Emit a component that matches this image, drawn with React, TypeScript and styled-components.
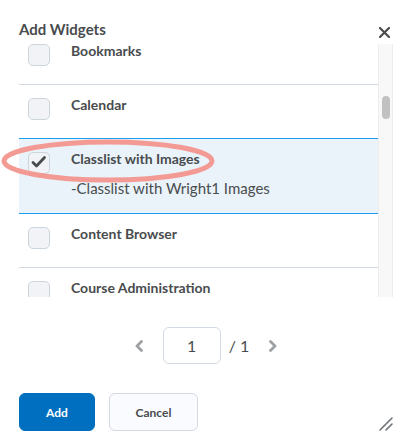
import React from 'react';
import styled, { createGlobalStyle } from 'styled-components';

const GlobalStyle = createGlobalStyle`
  html, body {
    margin: 0;
    padding: 0;
    background: #ffffff;
  }
  body {
    font-family: Lato, "Liberation Sans", sans-serif;
    color: #494c4e;
  }
`;

const Dialog = styled.div`
  position: relative;
  width: 411px;
  height: 444px;
  box-sizing: border-box;
  padding: 0 18px 0 19px;
  display: flex;
  flex-direction: column;
  overflow: hidden;
`;

const Header = styled.div`
  height: 44px;
  box-sizing: border-box;
  padding-top: 19px;
  display: flex;
  justify-content: space-between;
  align-items: flex-start;
`;

const Title = styled.h2`
  margin: 0;
  font-size: 15px;
  line-height: 20px;
  font-weight: 700;
  color: #494c4e;
`;

const CloseButton = styled.button`
  margin: 8px 3px 0 0;
  padding: 0;
  border: none;
  background: none;
  width: 11px;
  height: 11px;
  display: flex;
  cursor: pointer;
`;

const ListFrame = styled.div`
  display: flex;
  height: 253px;
`;

const Viewport = styled.div`
  flex: 1;
  overflow: hidden;
`;

const ListInner = styled.div<{ $offset: number }>`
  margin-top: ${({ $offset }) => -$offset}px;
`;

const Row = styled.div<{ $selected?: boolean; $afterSelected?: boolean }>`
  display: flex;
  align-items: flex-start;
  gap: 21px;
  box-sizing: border-box;
  min-height: 54px;
  padding: 10px 0 13px 9px;
  border-top: 1px solid
    ${({ $selected, $afterSelected }) => ($selected || $afterSelected ? '#1a9ff0' : '#d3d9e3')};
  background: ${({ $selected }) => ($selected ? '#eaf3fa' : 'transparent')};
`;

const Box = styled.span`
  flex: none;
  width: 22px;
  height: 22px;
  margin-top: 3px;
  box-sizing: border-box;
  border: 1px solid #cdd5dc;
  border-radius: 5px;
  background: #f1f3f6;
  display: flex;
`;

const RowText = styled.div`
  display: flex;
  flex-direction: column;
  gap: 7px;
`;

const RowTitle = styled.span`
  font-size: 14px;
  line-height: 20px;
  font-weight: 700;
  color: #494c4e;
`;

const RowDesc = styled.span`
  font-size: 15px;
  line-height: 24px;
  color: #494c4e;
`;

const Track = styled.div`
  width: 15px;
  box-sizing: border-box;
  background: #f8f8f8;
  border-left: 1px solid #ececec;
  border-right: 1px solid #ececec;
`;

const Thumb = styled.div`
  width: 8px;
  height: 23px;
  margin: 52px 0 0 3px;
  border-radius: 4px;
  background: #c1c1c1;
`;

const Pager = styled.div`
  margin-top: 30px;
  display: flex;
  justify-content: center;
  align-items: center;
`;

const Chevron = styled.button`
  padding: 0;
  border: none;
  background: none;
  display: flex;
  width: 8px;
  height: 12px;
`;

const PageInput = styled.div`
  width: 58px;
  height: 37px;
  box-sizing: border-box;
  margin: 0 8px 0 20px;
  border: 1px solid #d3d9e3;
  border-radius: 6px;
  display: flex;
  align-items: center;
  justify-content: center;
  font-size: 16px;
  color: #494c4e;
`;

const PageTotal = styled.span`
  font-size: 16px;
  line-height: 20px;
  color: #494c4e;
  margin-right: 20px;
`;

const Footer = styled.div`
  margin-top: 29px;
  display: flex;
  align-items: flex-end;
  gap: 14px;
`;

const Button = styled.button<{ $primary?: boolean; $w: number }>`
  width: ${({ $w }) => $w}px;
  height: 38px;
  box-sizing: border-box;
  border-radius: 6px;
  border: 1px solid ${({ $primary }) => ($primary ? '#006fbf' : '#d3d9e3')};
  background: ${({ $primary }) => ($primary ? '#006fbf' : '#f9fbff')};
  color: ${({ $primary }) => ($primary ? '#ffffff' : '#494c4e')};
  font-family: Lato, "Liberation Sans", sans-serif;
  font-size: 12px;
  font-weight: 700;
  cursor: pointer;
`;

const Grip = styled.span`
  margin-left: auto;
  display: flex;
  width: 14px;
  height: 14px;
`;

const Annotation = styled.svg`
  position: absolute;
  left: 0;
  top: 135px;
  pointer-events: none;
`;

const widgets = [
  { name: 'Bookmarks' },
  { name: 'Calendar' },
  { name: 'Classlist with Images', desc: '-Classlist with Wright1 Images', checked: true },
  { name: 'Content Browser' },
  { name: 'Course Administration' },
  { name: 'Course Banner' },
];

const CheckMark = () => (
  <svg width="20" height="20" viewBox="0 0 20 20">
    <polyline points="4,9.5 7.5,13 15.5,4.5" fill="none" stroke="#494c4e" strokeWidth="2.8" strokeLinecap="round" strokeLinejoin="round" />
  </svg>
);

const App: React.FC = () => {
  const selectedIndex = widgets.findIndex((w) => w.checked);

  return (
    <Dialog>
      <GlobalStyle />
      <Header>
        <Title>Add Widgets</Title>
        <CloseButton aria-label="Close">
          <svg width="11" height="11" viewBox="0 0 11 11">
            <path d="M1 1L10 10M10 1L1 10" stroke="#494c4e" strokeWidth="2.2" strokeLinecap="round" />
          </svg>
        </CloseButton>
      </Header>

      <ListFrame>
        <Viewport>
          <ListInner $offset={14}>
            {widgets.map((w, i) => (
              <Row key={w.name} $selected={w.checked} $afterSelected={i === selectedIndex + 1}>
                <Box>{w.checked && <CheckMark />}</Box>
                <RowText>
                  <RowTitle>{w.name}</RowTitle>
                  {w.desc && <RowDesc>{w.desc}</RowDesc>}
                </RowText>
              </Row>
            ))}
          </ListInner>
        </Viewport>
        <Track>
          <Thumb />
        </Track>
      </ListFrame>

      <Pager>
        <Chevron aria-label="Previous page">
          <svg width="8" height="12" viewBox="0 0 8 12">
            <polyline points="6.5,1.5 2,6 6.5,10.5" fill="none" stroke="#9ea1a3" strokeWidth="2.8" strokeLinecap="round" strokeLinejoin="round" />
          </svg>
        </Chevron>
        <PageInput>1</PageInput>
        <PageTotal>/ 1</PageTotal>
        <Chevron aria-label="Next page">
          <svg width="8" height="12" viewBox="0 0 8 12">
            <polyline points="1.5,1.5 6,6 1.5,10.5" fill="none" stroke="#9ea1a3" strokeWidth="2.8" strokeLinecap="round" strokeLinejoin="round" />
          </svg>
        </Chevron>
      </Pager>

      <Footer>
        <Button $primary $w={76}>Add</Button>
        <Button $w={89}>Cancel</Button>
        <Grip>
          <svg width="14" height="14" viewBox="0 0 14 14">
            <path d="M13 1L1 13M13 7L7 13" stroke="#6e7376" strokeWidth="1.6" strokeLinecap="round" />
          </svg>
        </Grip>
      </Footer>

      <Annotation width="220" height="55" viewBox="0 0 220 55">
        <ellipse cx="108" cy="26" rx="104" ry="19" fill="none" stroke="#f2958d" strokeOpacity="0.95" strokeWidth="5" />
      </Annotation>
    </Dialog>
  );
};

export default App;
